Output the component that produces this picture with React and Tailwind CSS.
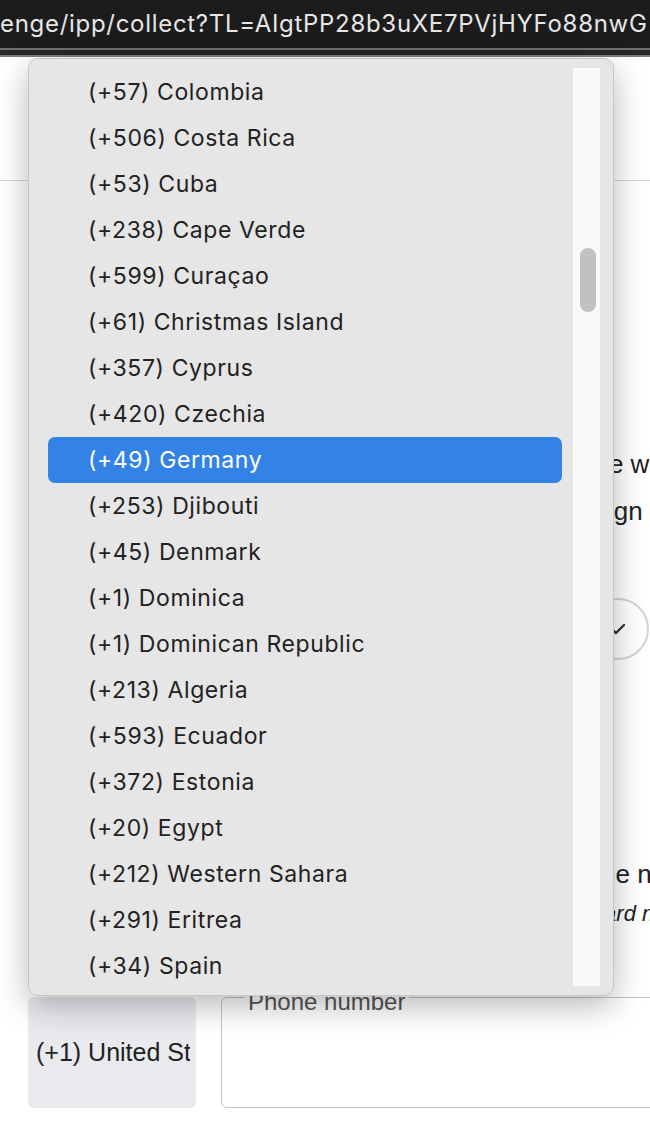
import React from 'react';

const countries = [
  ['+57', 'Colombia'],
  ['+506', 'Costa Rica'],
  ['+53', 'Cuba'],
  ['+238', 'Cape Verde'],
  ['+599', 'Curaçao'],
  ['+61', 'Christmas Island'],
  ['+357', 'Cyprus'],
  ['+420', 'Czechia'],
  ['+49', 'Germany'],
  ['+253', 'Djibouti'],
  ['+45', 'Denmark'],
  ['+1', 'Dominica'],
  ['+1', 'Dominican Republic'],
  ['+213', 'Algeria'],
  ['+593', 'Ecuador'],
  ['+372', 'Estonia'],
  ['+20', 'Egypt'],
  ['+212', 'Western Sahara'],
  ['+291', 'Eritrea'],
  ['+34', 'Spain'],
];

function StepCircle() {
  return (
    <div className="w-[62px] h-[62px] shrink-0 rounded-full border-2 border-[#d4d4d4] flex items-center justify-center">
      <svg width="16" height="12" viewBox="0 0 16 12" fill="none">
        <path d="M2 6.5 L6 10 L14 2" stroke="#333" strokeWidth="2.4" strokeLinecap="round" strokeLinejoin="round" />
      </svg>
    </div>
  );
}

function CountryDropdown({ selected }) {
  return (
    <div className="absolute left-[28px] top-[58px] w-[586px] h-[938px] flex rounded-[10px] border border-[#c6c6c6] bg-[#e6e6e6] shadow-[0_10px_32px_rgba(0,0,0,0.28)] font-['Inter',sans-serif]">
      {/* options */}
      <div className="w-[544px] pt-[10px] pl-[19px] pr-[11px] overflow-hidden">
        {countries.map(([code, name]) => {
          const active = name === selected;
          return (
            <div
              key={name}
              className={
                active
                  ? 'h-[46px] flex items-center pl-[40px] rounded-[7px] bg-[#3283e5] text-white text-[23px] tracking-[0.6px]'
                  : 'h-[46px] flex items-center pl-[40px] rounded-[7px] text-[#222] text-[23px] tracking-[0.6px]'
              }
            >
              ({code}) {name}
            </div>
          );
        })}
      </div>
      {/* scrollbar */}
      <div className="w-[27px] my-[9px] bg-[#fafafa]">
        <div className="mt-[180px] ml-[7px] w-[16px] h-[64px] rounded-full bg-[#c1c1c1]" />
      </div>
    </div>
  );
}

export default function App() {
  return (
    <div className="relative w-[650px] h-[1130px] overflow-hidden bg-white">
      {/* browser url bar */}
      <div className="h-[48px] bg-[#1c1c1c] flex items-center whitespace-nowrap overflow-hidden font-['Inter',sans-serif] text-[24px] tracking-[0.7px] text-[#e6e6e6]">
        enge/ipp/collect?TL=AIgtPP28b3uXE7PVjHYFo88nwG
      </div>
      <div className="h-[2px] bg-[#707070]" />
      <div className="h-[5px] bg-[#28282a]" />
      <div className="h-[2px] bg-[#7c7c7c]" />

      {/* page header */}
      <div className="h-[124px] border-b border-[#d6d6d6]" />

      {/* page body */}
      <div className="font-['Liberation_Sans',Arial,sans-serif] text-[#222]">
        <div className="pt-[260px] pl-[38px] text-[26px] leading-[47px] whitespace-nowrap">
          <p>To help keep your account secure, enter the phone we should text</p>
          <p>and we'll text you a security code whenever you sign in.</p>
        </div>

        <div className="mt-[63px] pl-[38px] flex gap-[121px]">
          <StepCircle />
          <StepCircle />
          <StepCircle />
          <StepCircle />
        </div>

        <div className="mt-[194px] pl-[36px] whitespace-nowrap">
          <p className="text-[26px] leading-[40px]">Standard messaging rates may apply for this phone number.</p>
          <p className="text-[22px] leading-[40px] italic">Note: We will never ask for your password, PIN, or credit card number.</p>
        </div>

        <div className="mt-[63px] pl-[28px] flex gap-[25px]">
          <div className="w-[168px] h-[111px] shrink-0 rounded-[6px] bg-[#e9eaed] flex items-center pl-[8px] text-[25px] text-[#222]">
            <div className="w-[154px] overflow-hidden whitespace-nowrap">(+1) United States</div>
          </div>
          <div className="relative w-[500px] h-[111px] shrink-0 rounded-[6px] border border-[#c4c4c4]">
            <span className="absolute left-[22px] top-[-10px] px-[4px] bg-white text-[24px] leading-[28px] text-[#555]">
              Phone number
            </span>
          </div>
        </div>
      </div>

      <CountryDropdown selected="Germany" />
    </div>
  );
}
